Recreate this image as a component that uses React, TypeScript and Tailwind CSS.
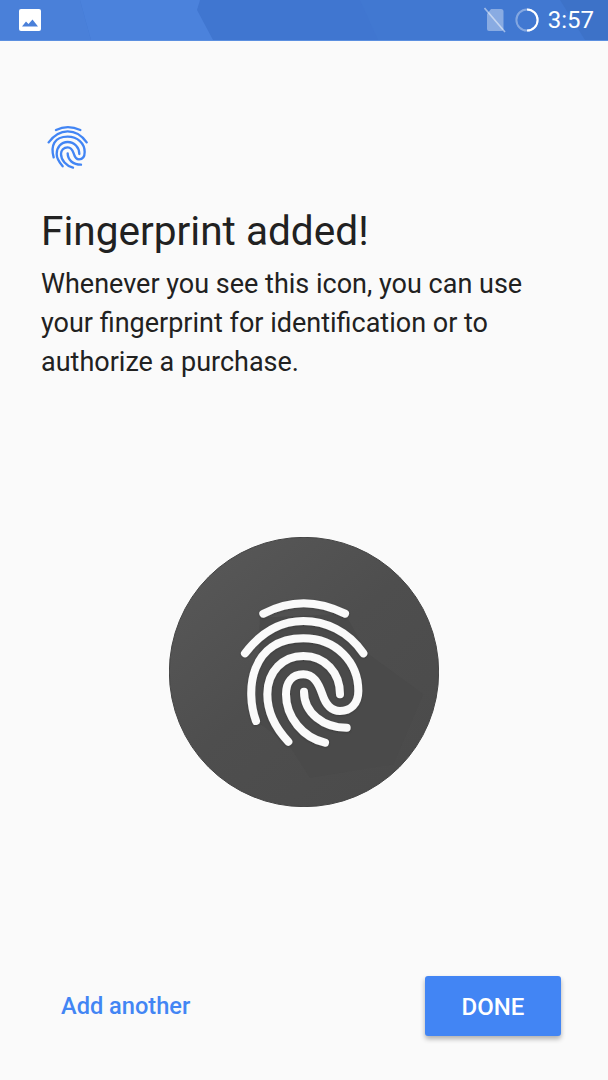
export default function App() {
  return (
    <div className="relative flex h-[1080px] w-[608px] flex-col overflow-hidden bg-[#fafafa] font-['Roboto',sans-serif]">
      <header className="relative flex h-[41px] shrink-0 items-center justify-between overflow-hidden border-b border-[#5b8fe0] bg-[#4076d0] pl-[19px] pr-[14px]">
        <svg className="absolute left-0 top-0" width="608" height="40" viewBox="0 0 608 40" aria-hidden="true">
          <polygon points="0,0 80,0 91,40 0,40" fill="#4a80d9" />
          <polygon points="80,0 200,0 197,10 213,40 91,40" fill="#4b82dc" />
          <polygon points="360,0 600,0 608,40 378,40" fill="#4178d1" />
          <polygon points="560,0 608,0 608,40 585,40" fill="#3d72c8" />
        </svg>
        <svg className="relative" width="22" height="22" viewBox="0 0 22 22" aria-hidden="true">
          <rect width="22" height="22" rx="2" fill="#fff" />
          <path d="M3 17.5 L7 12.5 L9.5 15 L13.5 10.5 L19 17.5 Z" fill="#4a80d9" />
        </svg>
        <div className="relative flex items-center">
          <svg width="22" height="26" viewBox="0 0 22 26" aria-hidden="true">
            <path d="M7 2 H17 Q19.5 2 19.5 4.5 V22 Q19.5 24 17.5 24 H5 Q3 24 3 22 V7 Z" fill="#fff" fillOpacity="0.38" />
            <path d="M0.5 1 L21 25" stroke="#fff" strokeOpacity="0.5" strokeWidth="1.6" />
          </svg>
          <svg className="ml-[9px]" width="24" height="24" viewBox="0 0 24 24" fill="none" aria-hidden="true">
            <circle cx="12" cy="12" r="10.6" stroke="#fff" strokeOpacity="0.35" strokeWidth="2" />
            <path d="M12 1.4 A10.6 10.6 0 0 1 12 22.6" stroke="#fff" strokeWidth="2" />
          </svg>
          <span className="ml-[9px] text-[24px] leading-none text-white">3:57</span>
        </div>
      </header>

      <main className="flex flex-1 flex-col px-[41px]">
        <svg className="ml-[6px] mt-[83px]" width="41" height="48" viewBox="0 0 123 144" fill="none" stroke="#4285f4" strokeWidth="7" strokeLinecap="round" aria-hidden="true">
          <path d="M27 18 Q62 1 100 18" />
          <path d="M5 55 C22 32 42 22 62 22 C82 22 103 32 119 55" />
          <path d="M20 100 C10 65 22 38 62 38 C92 38 113 58 113 84 C113 98 106 106 96 106 C88 106 83 98 80 88 C76 76 72 70 62 70 C50 70 42 79 42 90 C42 108 58 126 78 131" />
          <path d="M47 127 C36 114 29 102 29 90 C29 70 42 54 62 54 C82 54 97 70 97 90" />
          <path d="M62 88 C62 108 78 122 102 122" />
        </svg>
        <h1 className="mt-[35px] whitespace-nowrap text-[40.6px] font-normal leading-[48px] text-[#212121]">Fingerprint added!</h1>
        <p className="mt-[10px] w-[526px] text-[27px] leading-[39px] text-[#212121]">
          Whenever you see this icon, you can use your fingerprint for identification or to authorize a purchase.
        </p>
        <div className="mt-[155px] flex justify-center">
          <svg width="270" height="270" viewBox="27 18 810 810" aria-hidden="true">
            <defs>
              <linearGradient id="disc" x1="0.1" y1="0.1" x2="0.8" y2="0.9">
                <stop offset="0" stopColor="#575757" />
                <stop offset="0.5" stopColor="#4e4e4e" />
                <stop offset="1" stopColor="#4b4b4b" />
              </linearGradient>
              <clipPath id="discClip">
                <circle cx="432" cy="423" r="404" />
              </clipPath>
              <filter id="soft" x="-10%" y="-10%" width="120%" height="120%">
                <feDropShadow dx="0" dy="2" stdDeviation="3" floodColor="#000" floodOpacity="0.25" />
              </filter>
            </defs>
            <circle cx="432" cy="423" r="404" fill="url(#disc)" stroke="#444" strokeWidth="3" />
            <g clipPath="url(#discClip)">
              <polygon points="555,248 622,367 790,490 700,700 450,740 385,640 288,570 300,260" fill="#4a4a4a" />
            </g>
            <g fill="none" stroke="#fafafa" strokeWidth="24" strokeLinecap="round" filter="url(#soft)">
              <path d="M310 248 Q430 185 555 248" />
              <path d="M255 367 C310 295 370 270 430 270 C495 270 565 300 610 367" />
              <path d="M288 570 C255 480 270 322 430 322 C530 322 595 395 595 480 C595 520 570 540 540 540 C510 540 495 515 487 490 C475 455 460 430 430 430 C395 430 378 455 378 490 C378 560 430 620 495 635" />
              <path d="M385 632 C345 590 322 540 322 490 C322 420 370 375 430 375 C495 375 540 425 540 490" />
              <path d="M432 482 C432 545 490 590 560 590" />
            </g>
          </svg>
        </div>
      </main>

      <footer className="flex items-center justify-between pb-[44px] pl-[61px] pr-[47px]">
        <span className="relative top-[1px] text-[23.6px] font-medium text-[#4285f4]">Add another</span>
        <button className="flex h-[60px] w-[136px] items-center justify-center rounded-[3px] bg-[#4285f4] pt-[1px] text-[24px] font-medium text-white shadow-[0_3px_5px_rgba(0,0,0,0.3)]">
          DONE
        </button>
      </footer>
    </div>
  );
}
